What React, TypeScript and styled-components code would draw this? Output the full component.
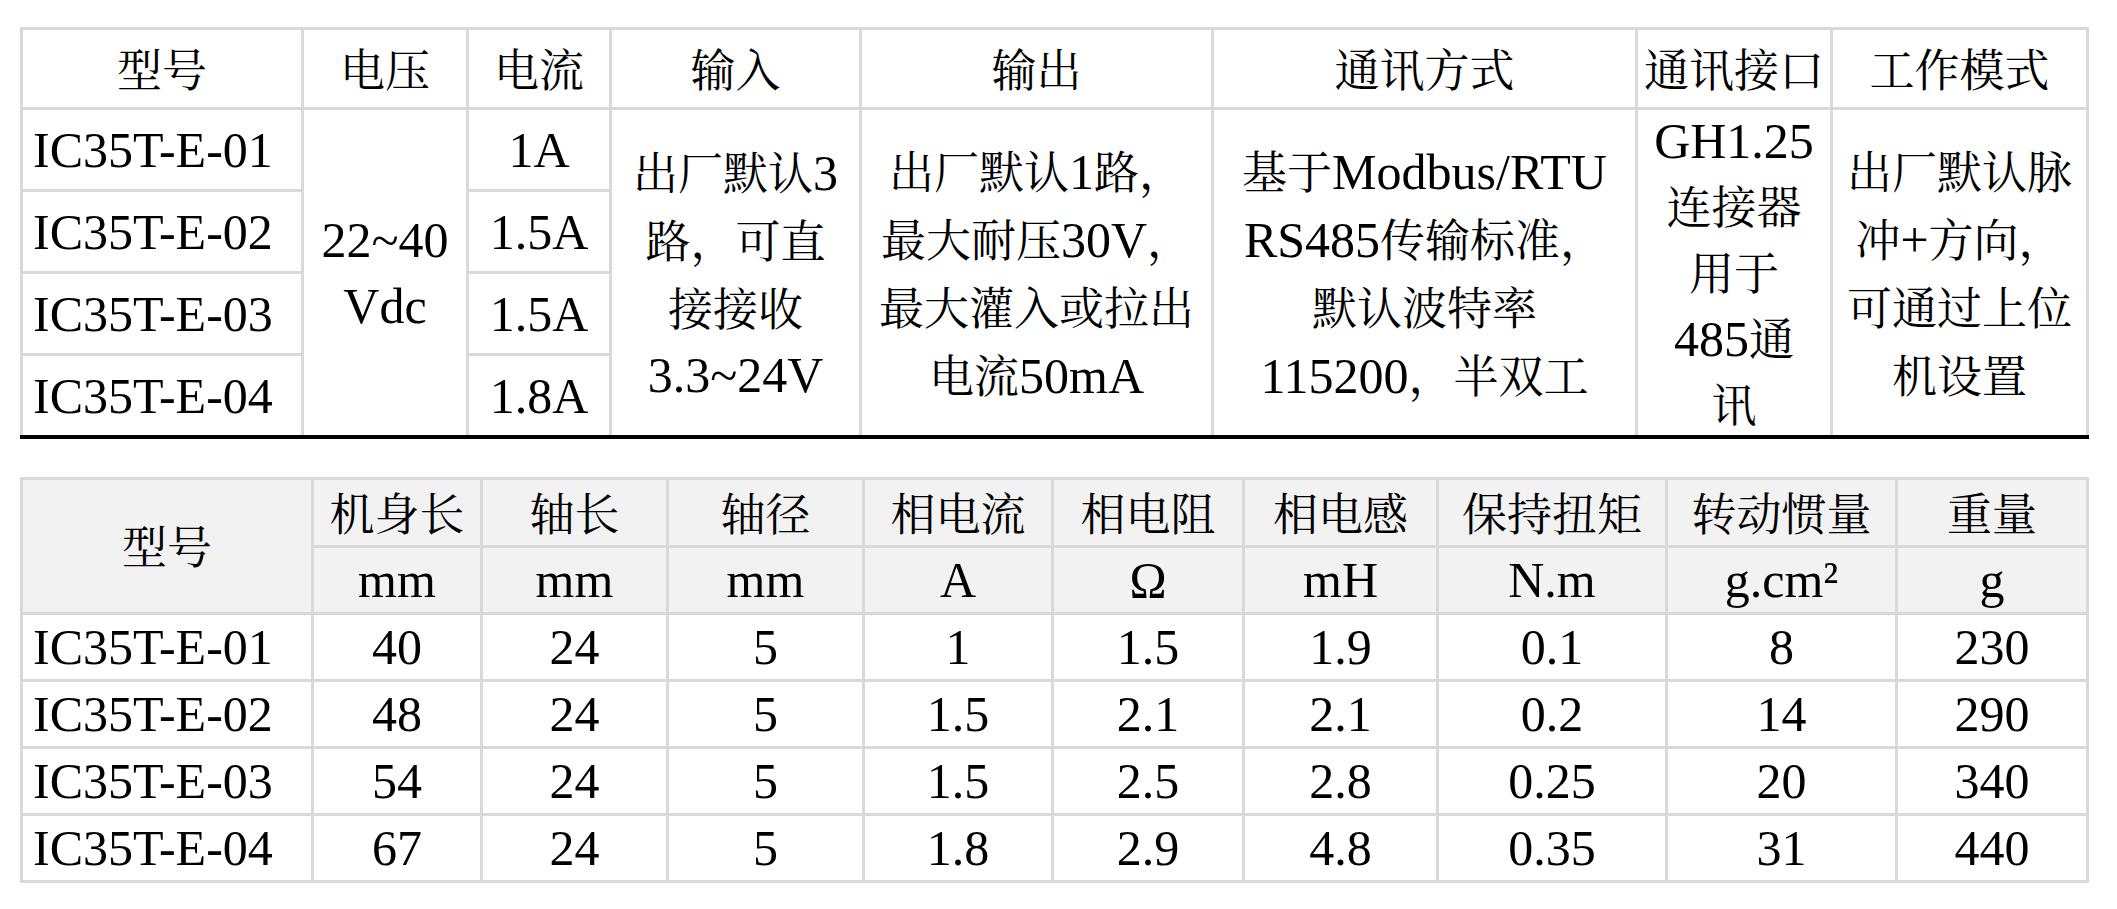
import React from 'react';
import styled, { createGlobalStyle } from 'styled-components';

const GlobalStyle = createGlobalStyle`
  html, body {
    margin: 0;
    padding: 0;
    background: #fff;
  }
  body {
    font-family: "Liberation Serif", "Noto Serif CJK SC", "Noto Sans CJK SC", serif;
    font-size: 50px;
    color: #000;
  }
`;

const Page = styled.div`
  padding: 27px 0 0 20px;
  display: flex;
  flex-direction: column;
  gap: 38px;
`;

const TopGrid = styled.div`
  display: grid;
  grid-template-columns: 278px 162px 140px 247px 349px 421px 192px 253px;
  grid-template-rows: 77px repeat(4, 79px);
  gap: 3px;
  padding: 3px 3px 0;
  background: #d9d9d9;
  border-bottom: 4px solid #000;
  width: max-content;
`;

const SpecGrid = styled.div`
  display: grid;
  grid-template-columns: 288px 166px 183px 193px 186px 188px 191px 226px 227px 188px;
  grid-template-rows: 65px repeat(5, 64px);
  gap: 3px;
  padding: 3px;
  background: #d9d9d9;
  width: max-content;
`;

const Cell = styled.div<{ $rows?: number; $left?: boolean; $head?: boolean }>`
  grid-row: span ${(p) => p.$rows ?? 1};
  background: ${(p) => (p.$head ? '#f2f2f2' : '#fff')};
  display: flex;
  align-items: center;
  justify-content: ${(p) => (p.$left ? 'flex-start' : 'center')};
  padding-left: ${(p) => (p.$left ? '10px' : '0')};
  overflow: hidden;
  white-space: nowrap;
`;

const Text = styled.span<{ $tight?: boolean }>`
  display: block;
  text-align: center;
  line-height: ${(p) => (p.$tight ? '64px' : '66px')};
`;

const Han = styled.span`
  font-family: "Noto Serif CJK SC", "Noto Sans CJK SC", serif;
  font-size: 45px;
`;

const HAN_RE = /([\u3000-\u303f\u4e00-\u9fff\uff00-\uffef]+)/;

const mix = (text: string) =>
  text.split(HAN_RE).map((part, i) =>
    HAN_RE.test(part) ? <Han key={i}>{part}</Han> : <React.Fragment key={i}>{part}</React.Fragment>
  );

const lines = (rows: string[]) =>
  rows.map((row, i) => (
    <React.Fragment key={i}>
      {i > 0 && <br />}
      {mix(row)}
    </React.Fragment>
  ));

const topHead = ['型号', '电压', '电流', '输入', '输出', '通讯方式', '通讯接口', '工作模式'];
const models = ['IC35T-E-01', 'IC35T-E-02', 'IC35T-E-03', 'IC35T-E-04'];
const currents = ['1A', '1.5A', '1.5A', '1.8A'];
const shared = [
  ['出厂默认3', '路，可直', '接接收', '3.3~24V'],
  ['出厂默认1路，', '最大耐压30V，', '最大灌入或拉出', '电流50mA'],
  ['基于Modbus/RTU', 'RS485传输标准，', '默认波特率', '115200，半双工'],
  ['GH1.25', '连接器', '用于', '485通', '讯'],
  ['出厂默认脉', '冲+方向，', '可通过上位', '机设置'],
];

const specHead = [
  ['机身长', 'mm'],
  ['轴长', 'mm'],
  ['轴径', 'mm'],
  ['相电流', 'A'],
  ['相电阻', 'Ω'],
  ['相电感', 'mH'],
  ['保持扭矩', 'N.m'],
  ['转动惯量', 'g.cm²'],
  ['重量', 'g'],
];

const specRows = [
  ['40', '24', '5', '1', '1.5', '1.9', '0.1', '8', '230'],
  ['48', '24', '5', '1.5', '2.1', '2.1', '0.2', '14', '290'],
  ['54', '24', '5', '1.5', '2.5', '2.8', '0.25', '20', '340'],
  ['67', '24', '5', '1.8', '2.9', '4.8', '0.35', '31', '440'],
];

const DriverTable = () => (
  <TopGrid>
    {topHead.map((h) => (
      <Cell key={h}>
        <Text>{mix(h)}</Text>
      </Cell>
    ))}
    {models.map((m, i) => (
      <React.Fragment key={m}>
        <Cell $left>
          <Text>{m}</Text>
        </Cell>
        {i === 0 && (
          <Cell $rows={4}>
            <Text>{lines(['22~40', 'Vdc'])}</Text>
          </Cell>
        )}
        <Cell>
          <Text>{currents[i]}</Text>
        </Cell>
        {i === 0 &&
          shared.map((s, j) => (
            <Cell key={j} $rows={4}>
              <Text $tight={s.length > 4}>{lines(s)}</Text>
            </Cell>
          ))}
      </React.Fragment>
    ))}
  </TopGrid>
);

const SpecTable = () => (
  <SpecGrid>
    <Cell $head $rows={2}>
      <Text>{mix('型号')}</Text>
    </Cell>
    {specHead.map(([name]) => (
      <Cell $head key={name}>
        <Text>{mix(name)}</Text>
      </Cell>
    ))}
    {specHead.map(([name, unit]) => (
      <Cell $head key={name + unit}>
        <Text>{unit}</Text>
      </Cell>
    ))}
    {specRows.map((row, i) => (
      <React.Fragment key={i}>
        <Cell $left>
          <Text>{models[i]}</Text>
        </Cell>
        {row.map((v, j) => (
          <Cell key={j}>
            <Text>{v}</Text>
          </Cell>
        ))}
      </React.Fragment>
    ))}
  </SpecGrid>
);

export default function App() {
  return (
    <>
      <GlobalStyle />
      <Page>
        <DriverTable />
        <SpecTable />
      </Page>
    </>
  );
}
